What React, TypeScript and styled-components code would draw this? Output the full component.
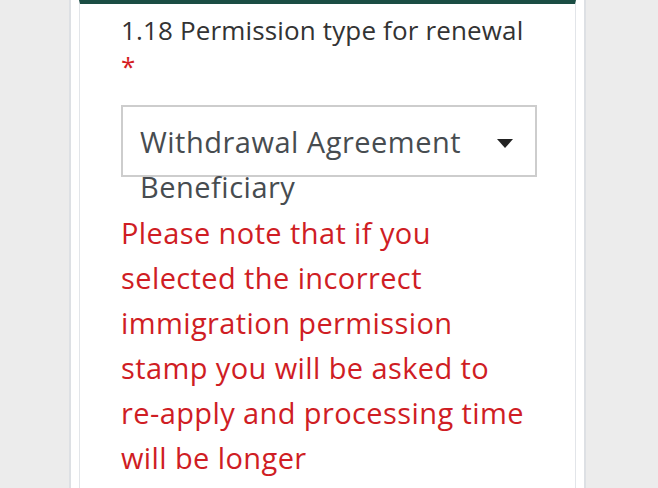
import React from "react";
import styled, { createGlobalStyle } from "styled-components";

const Global = createGlobalStyle`
  html, body { margin: 0; padding: 0; background: #ececec; }
  body { font-family: "Open Sans", "Noto Sans", sans-serif; height: 488px; overflow: hidden; }
`;

const Page = styled.div`
  display: flex;
  justify-content: flex-start;
  padding-left: 69px;
  height: 488px;
`;

const Outer = styled.div`
  width: 517px;
  background: #ffffff;
  border-left: 2px solid #dde0e4;
  border-right: 2px solid #dde0e4;
  padding: 0 8px;
  box-sizing: border-box;
  height: 100%;
`;

const Card = styled.div`
  background: #fff;
  border-left: 1px solid #e2e5e9;
  border-right: 1px solid #e2e5e9;
  border-top: 4px solid #1b4d44;
  height: 100%;
  box-sizing: border-box;
  padding: 8px 0 0 41px;
`;

const Column = styled.div`
  width: 416px;
`;

const Label = styled.div`
  font-size: 26px;
  letter-spacing: 0.15px;
  line-height: 36px;
  color: #333;
`;

const Required = styled.span`
  display: block;
  color: #d41c22;
`;

const SelectBox = styled.div`
  position: relative;
  margin-top: 21px;
  height: 72px;
  box-sizing: border-box;
  border: 2px solid #cdcdcd;
  padding: 12px 70px 0 17px;
`;

const SelectText = styled.div`
  font-size: 29px;
  letter-spacing: 0.5px;
  line-height: 45px;
  color: #474c50;
`;

const Caret = styled.svg`
  position: absolute;
  right: 22px;
  top: 32px;
`;

const Note = styled.p`
  margin: 33px 0 0;
  width: 410px;
  font-size: 29px;
  letter-spacing: 0.4px;
  line-height: 45px;
  color: #cf1d24;
`;

export default function App() {
  return (
    <>
      <Global />
      <Page>
        <Outer>
          <Card>
            <Column>
              <Label>
                1.18 Permission type for renewal
                <Required>*</Required>
              </Label>
              <SelectBox>
                <SelectText>Withdrawal Agreement Beneficiary</SelectText>
                <Caret width="16" height="10" viewBox="0 0 16 10">
                  <path d="M0 0 H16 L8 9 Z" fill="#222" />
                </Caret>
              </SelectBox>
              <Note>
                Please note that if you selected the incorrect immigration
                permission stamp you will be asked to re-apply and processing
                time will be longer
              </Note>
            </Column>
          </Card>
        </Outer>
      </Page>
    </>
  );
}
